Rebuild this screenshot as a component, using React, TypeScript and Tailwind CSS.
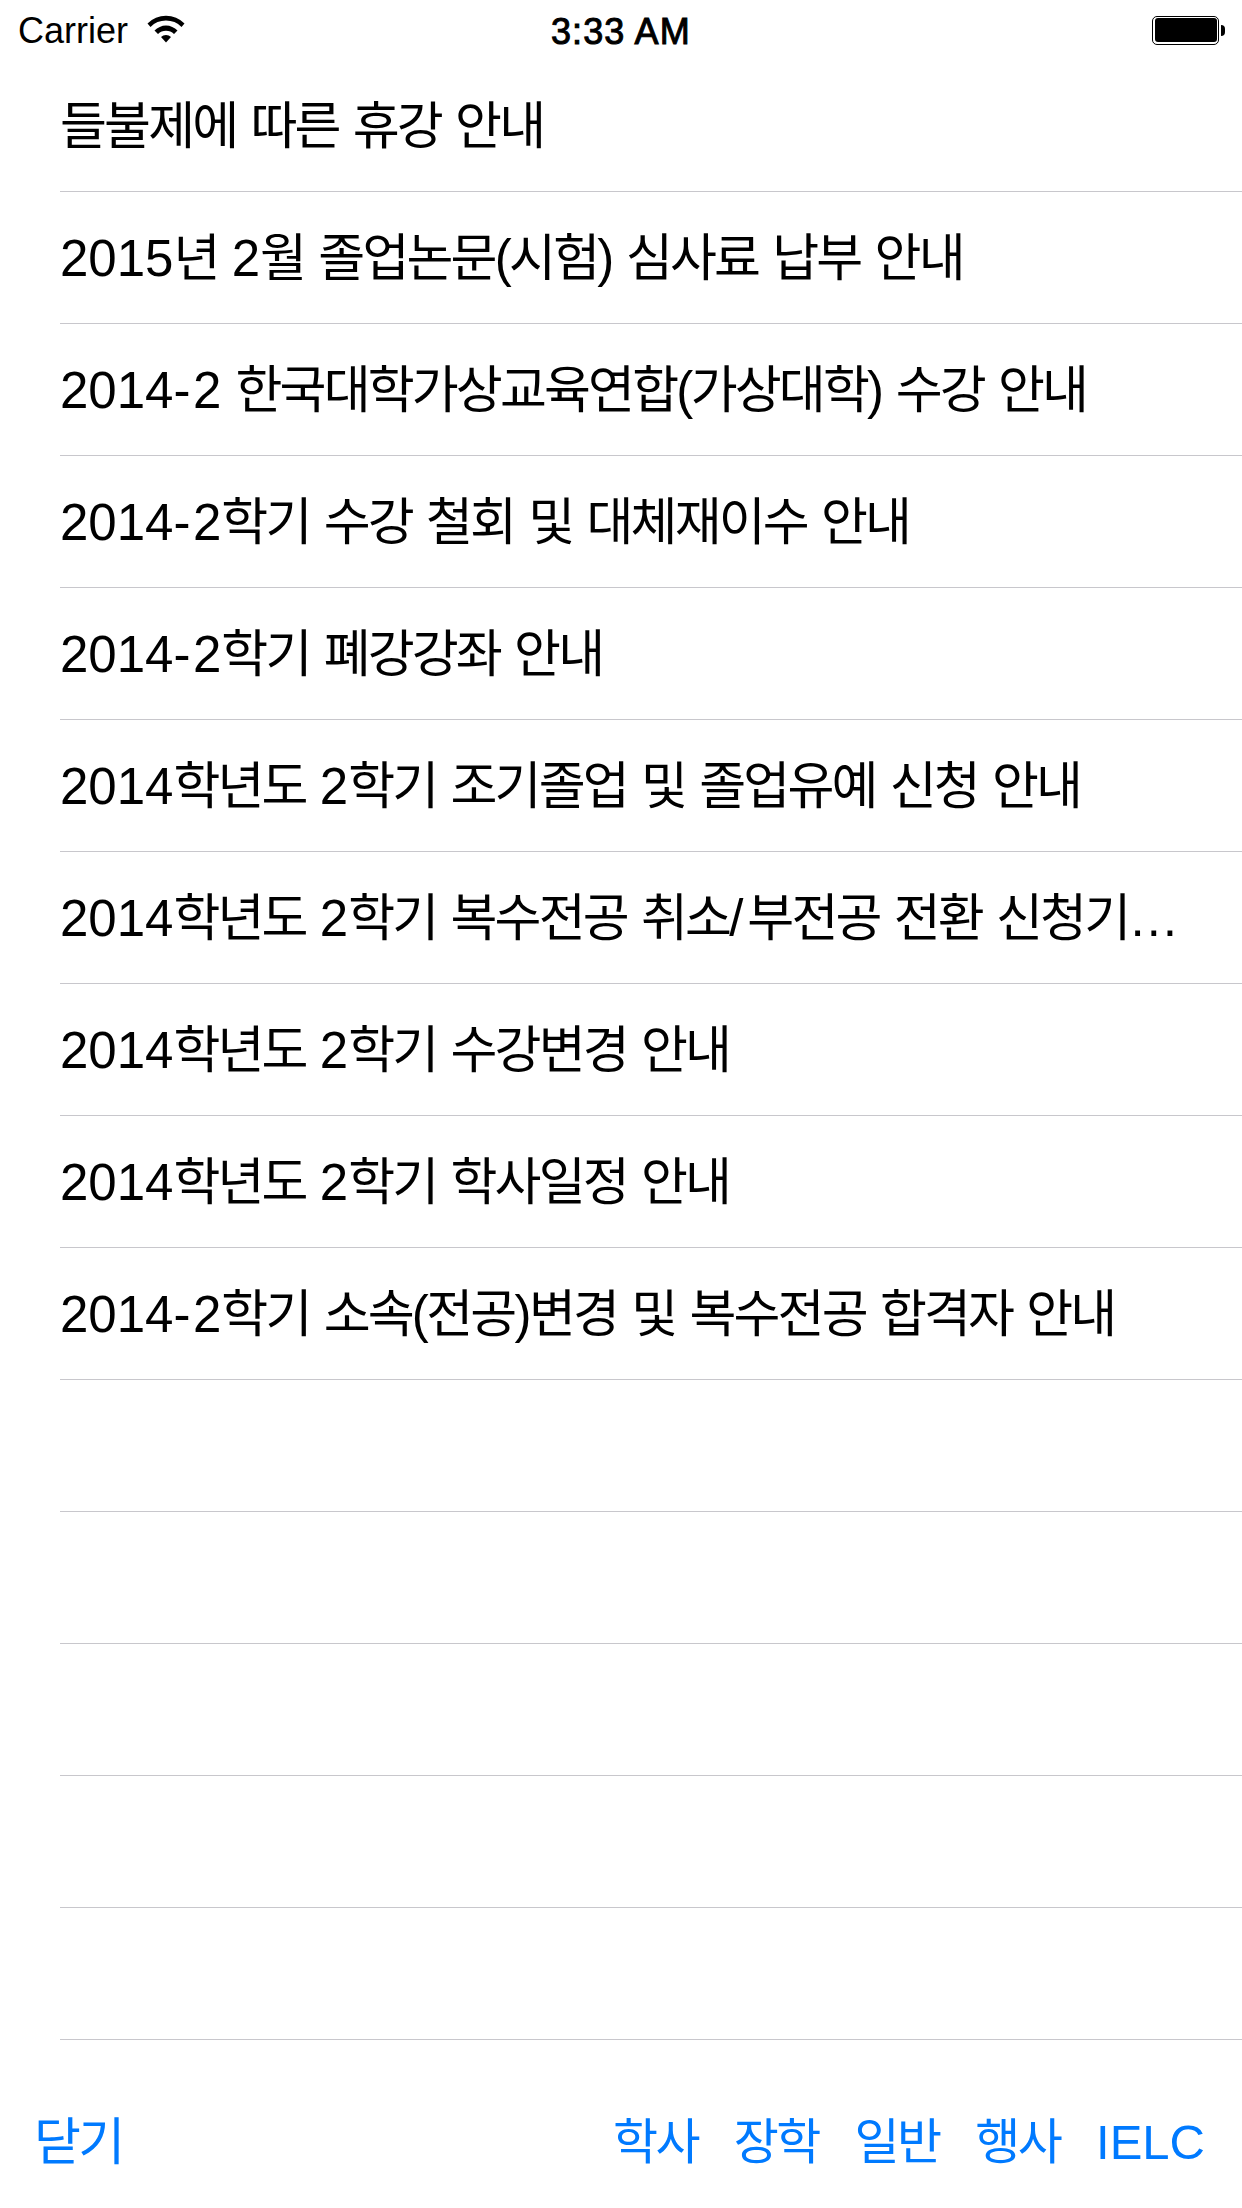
const rows = [
  "들불제에 따른 휴강 안내",
  "2015년 2월 졸업논문(시험) 심사료 납부 안내",
  "2014-2 한국대학가상교육연합(가상대학) 수강 안내",
  "2014-2학기 수강 철회 및 대체재이수 안내",
  "2014-2학기 폐강강좌 안내",
  "2014학년도 2학기 조기졸업 및 졸업유예 신청 안내",
  "2014학년도 2학기 복수전공 취소/부전공 전환 신청기…",
  "2014학년도 2학기 수강변경 안내",
  "2014학년도 2학기 학사일정 안내",
  "2014-2학기 소속(전공)변경 및 복수전공 합격자 안내",
  "", "", "", "", "",
];

function Mixed({ text }: { text: string }) {
  return (
    <>
      {text.split(/([가-힣]+|[()]|-|\/)/).map((part, i) => {
        if (/[가-힣]/.test(part)) return <span key={i} className="tracking-[-2.85px]">{part}</span>;
        if (part === "(" || part === ")") return <span key={i} className="tracking-[-2.5px]">{part}</span>;
        if (part === "-") return <span key={i} className="tracking-[2.5px]">{part}</span>;
        if (part === "/") return <span key={i} className="tracking-[4px]">{part}</span>;
        return <span key={i}>{part}</span>;
      })}
    </>
  );
}

export default function App() {
  return (
    <div className="flex h-[2208px] w-[1242px] flex-col overflow-hidden bg-white text-black [font-family:'Liberation_Sans','Noto_Sans_CJK_KR',sans-serif]">
      <div className="relative flex h-[60px] items-center justify-between pl-[18px] pr-[17px] pt-[2px] text-[36px]">
        <div className="flex items-center gap-[19px]">
          <span>Carrier</span>
          <svg width="38" height="28" viewBox="0 0 38 28" className="mb-[4px]">
            <path d="M0.5 8.5 A26 26 0 0 1 37.5 8.5 L34.5 12 A21.5 21.5 0 0 0 3.5 12 Z" fill="#000" />
            <path d="M7.5 15.5 A16 16 0 0 1 30.5 15.5 L27 19 A11.5 11.5 0 0 0 11 19 Z" fill="#000" />
            <path d="M14 22 A7 7 0 0 1 24 22 L19 27.5 Z" fill="#000" />
          </svg>
        </div>
        <span className="absolute left-[551px] top-[11px] leading-[41px] tracking-[1.1px] [-webkit-text-stroke:1px_black]">3:33 AM</span>
        <div className="mb-[2px] flex items-center">
          <div className="flex h-[29px] w-[67px] items-center justify-center rounded-[5px] border-[1.5px] border-black p-[1.5px]">
            <div className="h-full w-full rounded-[3px] bg-black" />
          </div>
          <div className="ml-[2px] h-[11px] w-[4px] rounded-r-[4px] bg-black" />
        </div>
      </div>
      <div className="flex flex-col">
        {rows.map((r, i) => (
          <div key={i} className="h-[132px] pl-[60px]">
            <div className="flex h-full items-center whitespace-pre border-b border-[#c8c7cc] pt-[3px] text-[51px]">
              <div><Mixed text={r} /></div>
            </div>
          </div>
        ))}
      </div>
      <div className="flex flex-1 items-center justify-between pl-[34px] pr-[37px] pt-[38px] text-[51px] text-[#007aff]">
        <span className="tracking-[-2.7px]">닫기</span>
        <div className="flex items-center gap-[36px] text-[49px]">
          <span className="tracking-[-2.7px]">학사</span>
          <span className="tracking-[-2.7px]">장학</span>
          <span className="tracking-[-2.7px]">일반</span>
          <span className="tracking-[-2.7px]">행사</span>
          <span>IELC</span>
        </div>
      </div>
    </div>
  );
}
